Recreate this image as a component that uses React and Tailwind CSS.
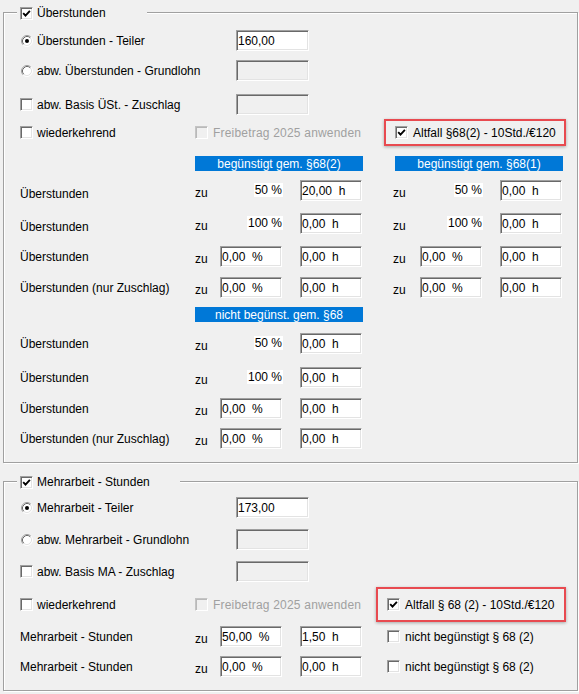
import React from 'react';

// classic sunken checkbox, optional tick
const Check = ({ checked = false, disabled = false }) => (
    <span
        className={`flex h-[13px] w-[13px] shrink-0 items-center justify-center border ${
            disabled
                ? 'border-t-[#c4c4c4] border-l-[#c4c4c4] border-b-white border-r-white bg-[#f0f0f0] shadow-[inset_1px_1px_0_#b9b9b9]'
                : 'border-t-[#a0a0a0] border-l-[#a0a0a0] border-b-white border-r-white bg-white shadow-[inset_1px_1px_0_#696969,inset_-1px_-1px_0_#e3e3e3]'
        }`}
    >
        {checked && (
            <svg width="9" height="9" viewBox="0 0 9 9">
                <path d="M1.2 4.2 L3.5 6.6 L7.9 1.9" fill="none" stroke="#000" strokeWidth="1.9" />
            </svg>
        )}
    </span>
);

const Radio = ({ checked = false }) => (
    <svg width="12" height="12" viewBox="0 0 12 12" className="ml-[1px] shrink-0">
        <circle cx="6" cy="6" r="5" fill="#fff" />
        <path d="M2.11 9.89 A5.5 5.5 0 0 1 9.89 2.11" fill="none" stroke="#a0a0a0" />
        <path d="M9.89 2.11 A5.5 5.5 0 0 1 2.11 9.89" fill="none" stroke="#fff" />
        <path d="M2.82 9.18 A4.5 4.5 0 0 1 9.18 2.82" fill="none" stroke="#696969" />
        <path d="M9.18 2.82 A4.5 4.5 0 0 1 2.82 9.18" fill="none" stroke="#e3e3e3" />
        {checked && <circle cx="6" cy="6" r="2" fill="#000" />}
    </svg>
);

// sunken edit box
const Field = ({ value = '', disabled = false, className = 'w-[62px]' }) => (
    <div
        className={`flex h-[21px] shrink-0 items-center whitespace-pre border border-t-[#a0a0a0] border-l-[#a0a0a0] border-b-white border-r-white pl-[1px] pt-[1px] shadow-[inset_1px_1px_0_#696969,inset_-1px_-1px_0_#e3e3e3] ${
            disabled ? 'bg-[#f0f0f0]' : 'bg-white'
        } ${className}`}
    >
        {value}
    </div>
);

// fixed rate label or editable rate, always 63px wide
const Rate = ({ rate }) => (
    <div className="flex w-[63px] shrink-0 justify-end">
        {rate.fixed ? (
            <span className="-translate-y-[1px] bg-white px-[1px] leading-[14px]">{rate.fixed}</span>
        ) : (
            <Field value={rate.value} className="mr-[1px] w-[62px]" />
        )}
    </div>
);

const Header = ({ children, className = '' }) => (
    <div className={`flex h-[15px] w-[168px] shrink-0 items-center justify-center bg-[#0078d7] text-white ${className}`}>
        {children}
    </div>
);

const Group = ({ title, titleWidth, className, children }) => (
    <div className={`relative border border-[#a0a0a0] shadow-[1px_1px_0_#fff,inset_1px_1px_0_#fff] ${className}`}>
        <div className={`absolute -top-[7px] left-[13px] flex h-[14px] items-center gap-[4px] bg-[#f0f0f0] pl-[3px] ${titleWidth}`}>
            <Check checked />
            <span>{title}</span>
        </div>
        <div className="flex flex-col pl-[16px]">{children}</div>
    </div>
);

const OptionRow = ({ control, label, field, className }) => (
    <div className={`flex h-[21px] items-center ${className}`}>
        <div className="flex w-[216px] shrink-0 items-center gap-[4px]">
            {control}
            <span>{label}</span>
        </div>
        {field}
    </div>
);

const Zu = ({ className = 'w-[25px]' }) => <span className={`shrink-0 translate-y-[2px] ${className}`}>zu</span>;

const OverRow = ({ row }) => (
    <div className={`flex h-[21px] items-center ${row.mt}`}>
        <span className={`w-[175px] shrink-0 ${row.low ? 'translate-y-[3px]' : ''}`}>{row.label}</span>
        <Zu />
        <Rate rate={row.rate} />
        <Field value={row.hours} className="ml-[17px] w-[62px]" />
        {row.right && (
            <>
                <Zu className="ml-[31px] w-[27px]" />
                <Rate rate={row.right.rate} />
                <Field value={row.right.hours} className="ml-[17px] w-[62px]" />
            </>
        )}
    </div>
);

const favoured = [
    { label: 'Überstunden', low: true, mt: 'mt-[9px]', rate: { fixed: '50 %' }, hours: '20,00  h', right: { rate: { fixed: '50 %' }, hours: '0,00  h' } },
    { label: 'Überstunden', low: true, mt: 'mt-[12px]', rate: { fixed: '100 %' }, hours: '0,00  h', right: { rate: { fixed: '100 %' }, hours: '0,00  h' } },
    { label: 'Überstunden', mt: 'mt-[12px]', rate: { value: '0,00  %' }, hours: '0,00  h', right: { rate: { value: '0,00  %' }, hours: '0,00  h' } },
    { label: 'Überstunden (nur Zuschlag)', mt: 'mt-[10px]', rate: { value: '0,00  %' }, hours: '0,00  h', right: { rate: { value: '0,00  %' }, hours: '0,00  h' } },
];

const plain = [
    { label: 'Überstunden', mt: 'mt-[11px]', rate: { fixed: '50 %' }, hours: '0,00  h' },
    { label: 'Überstunden', mt: 'mt-[13px]', rate: { fixed: '100 %' }, hours: '0,00  h' },
    { label: 'Überstunden', mt: 'mt-[10px]', rate: { value: '0,00  %' }, hours: '0,00  h' },
    { label: 'Überstunden (nur Zuschlag)', mt: 'mt-[9px]', rate: { value: '0,00  %' }, hours: '0,00  h' },
];

const extra = [
    { pct: '50,00  %', hours: '1,50  h', mt: 'mt-[4px]' },
    { pct: '0,00  %', hours: '0,00  h', mt: 'mt-[9px]' },
];

const Freibetrag = ({ className }) => (
    <div className={`flex shrink-0 items-center gap-[5px] ${className}`}>
        <Check disabled />
        <span className="tracking-[0.2px] text-[#a0a0a0]">Freibetrag 2025 anwenden</span>
    </div>
);

const Altfall = ({ label, className }) => (
    <div className={`flex shrink-0 items-center gap-[5px] border-2 border-[#e84a50] pl-[9px] shadow-[0_1px_3px_rgba(0,0,0,0.3)] ${className}`}>
        <Check checked />
        <span>{label}</span>
    </div>
);

export default function App() {
    return (
        <div className="h-[694px] w-[579px] overflow-hidden bg-[#f0f0f0] pl-[3px] pt-[12px] font-['Liberation_Sans',Arial,sans-serif] text-[12px] leading-[14px] text-black">
            {/* Überstunden */}
            <Group title="Überstunden" titleWidth="w-[130px]" className="h-[451px] w-[575px]">
                <OptionRow className="mt-[17px]" control={<Radio checked />} label="Überstunden - Teiler" field={<Field value="160,00" className="w-[73px]" />} />
                <OptionRow className="mt-[9px]" control={<Radio />} label="abw. Überstunden - Grundlohn" field={<Field disabled className="w-[73px]" />} />
                <OptionRow className="mt-[13px]" control={<Check />} label="abw. Basis ÜSt. - Zuschlag" field={<Field disabled className="w-[73px]" />} />

                <div className="mt-[4px] flex h-[27px] items-center">
                    <div className="flex w-[175px] shrink-0 items-center gap-[4px]">
                        <Check />
                        <span>wiederkehrend</span>
                    </div>
                    <Freibetrag className="w-[189px]" />
                    <Altfall label="Altfall §68(2) - 10Std./€120" className="h-[27px] w-[182px]" />
                </div>

                <div className="mt-[10px] flex">
                    <Header className="ml-[175px]">begünstigt gem. §68(2)</Header>
                    <Header className="ml-[32px]">begünstigt gem. §68(1)</Header>
                </div>

                {favoured.map((row, idx) => (
                    <OverRow key={idx} row={row} />
                ))}

                <div className="mt-[9px] flex">
                    <Header className="ml-[175px]">nicht begünst. gem. §68</Header>
                </div>

                {plain.map((row, idx) => (
                    <OverRow key={idx} row={row} />
                ))}
            </Group>

            {/* Mehrarbeit */}
            <Group title="Mehrarbeit - Stunden" titleWidth="w-[163px]" className="mt-[18px] h-[210px] w-[575px]">
                <OptionRow className="mt-[15px]" control={<Radio checked />} label="Mehrarbeit - Teiler" field={<Field value="173,00" className="w-[73px]" />} />
                <OptionRow className="mt-[11px]" control={<Radio />} label="abw. Mehrarbeit - Grundlohn" field={<Field disabled className="w-[73px]" />} />
                <OptionRow className="mt-[11px]" control={<Check />} label="abw. Basis MA - Zuschlag" field={<Field disabled className="w-[73px]" />} />

                <div className="mt-[5px] flex h-[35px] items-center">
                    <div className="flex w-[175px] shrink-0 items-center gap-[4px]">
                        <Check />
                        <span>wiederkehrend</span>
                    </div>
                    <Freibetrag className="w-[181px]" />
                    <Altfall label="Altfall § 68 (2) - 10Std./€120" className="h-[35px] w-[190px]" />
                </div>

                {extra.map((row, idx) => (
                    <div key={idx} className={`flex h-[21px] items-center ${row.mt}`}>
                        <span className="w-[175px] shrink-0">Mehrarbeit - Stunden</span>
                        <Zu />
                        <Field value={row.pct} className="w-[62px]" />
                        <Field value={row.hours} className="ml-[18px] w-[62px]" />
                        <div className="ml-[25px] flex items-center gap-[5px]">
                            <Check />
                            <span>nicht begünstigt § 68 (2)</span>
                        </div>
                    </div>
                ))}
            </Group>
        </div>
    );
}
